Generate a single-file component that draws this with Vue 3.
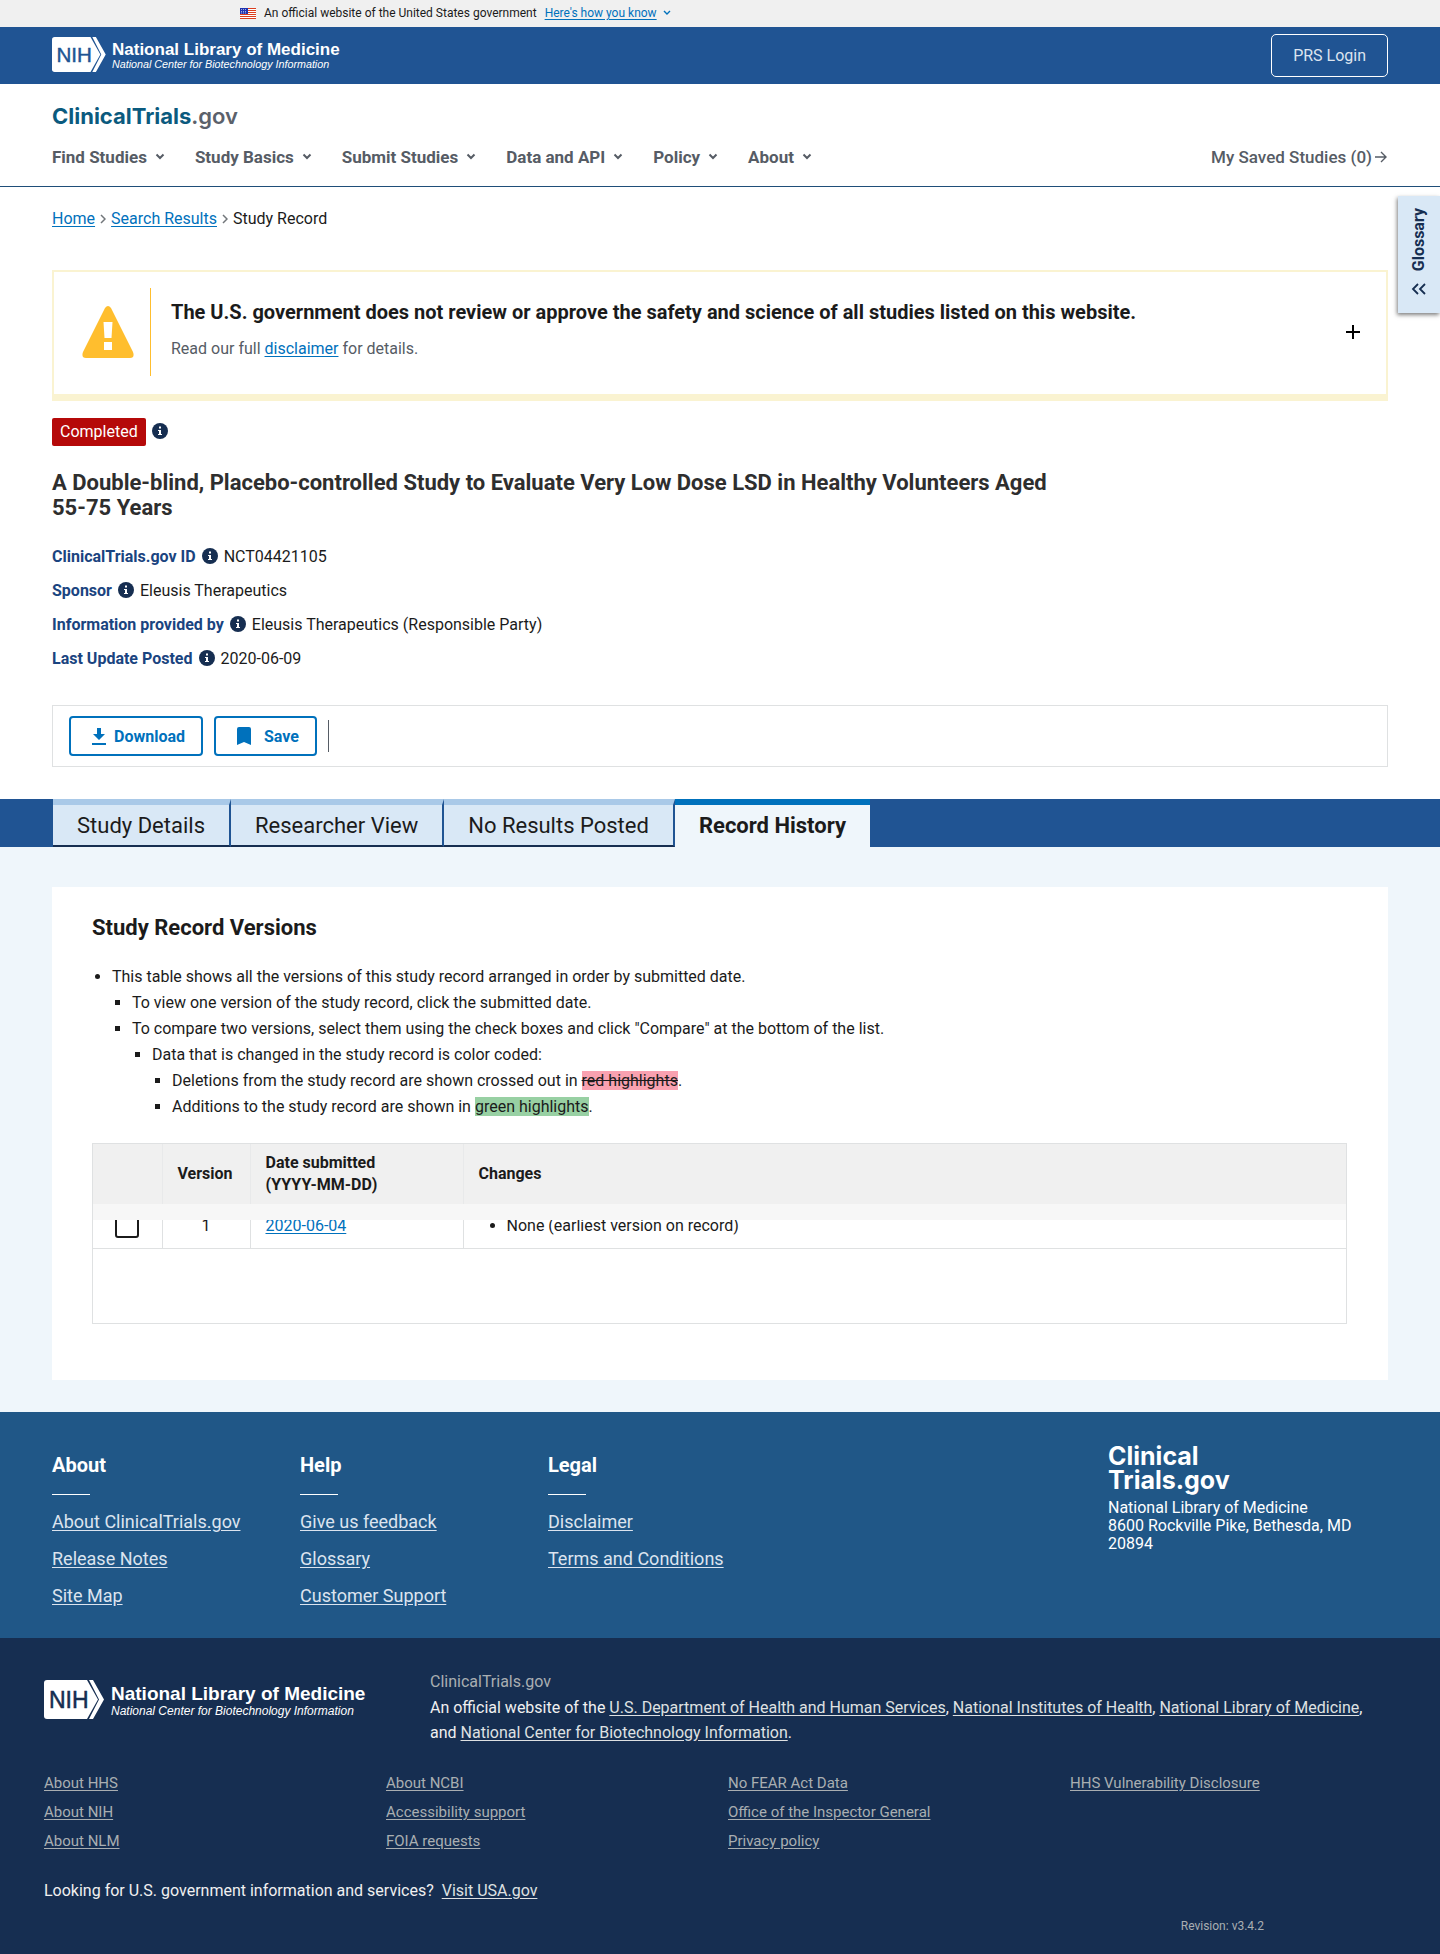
<template>
  <div class="page">
    <!-- 政府網站橫幅 -->
    <div class="gov-banner">
      <svg class="flag" viewBox="0 0 16 11" aria-hidden="true">
        <rect width="16" height="11" fill="#fff" />
        <path d="M0 .5h16M0 2.5h16M0 4.5h16M0 6.5h16M0 8.5h16M0 10.5h16" stroke="#db3e1f" />
        <rect width="8" height="6" fill="#1e33b1" />
        <path d="M1 1.5h6M1 3.5h6M1 5h6" stroke="#fff" stroke-width=".6" stroke-dasharray="1 1" />
      </svg>
      <span>An official website of the United States government</span>
      <button type="button" class="banner-link">
        <span class="banner-link-text">Here's how you know</span>
        <svg viewBox="0 0 8 6" width="8" height="6" aria-hidden="true">
          <path d="M1 1l3 3 3-3" fill="none" stroke="currentColor" stroke-width="1.4" />
        </svg>
      </button>
    </div>

    <header>
      <div class="ncbi-bar">
        <svg class="nlm-logo" viewBox="0 0 326 39" role="img">
          <path d="M3 0H43L54 19.5 43 39H3Q0 39 0 36V3Q0 0 3 0Z" fill="#fff" />
          <path d="M45 0H49L60 19.5 49 39H45L55 19.5Z" fill="#fff" />
          <text x="5" y="28" font-size="23" fill="#205493" stroke="#205493" stroke-width=".5">NIH</text>
          <text x="67" y="20" font-size="19" font-weight="700" fill="#fff">National Library of Medicine</text>
          <text x="67" y="35" font-size="12" font-style="italic" fill="#fff">National Center for Biotechnology Information</text>
        </svg>
        <a href="#" class="prs-login">PRS Login</a>
      </div>

      <div class="site-head">
        <a href="#" class="site-logo">ClinicalTrials<span>.gov</span></a>
        <nav class="main-nav">
          <button v-for="item in navItems" :key="item" type="button" class="nav-item">
            {{ item }}
            <svg viewBox="0 0 10 8" width="10" height="8" aria-hidden="true">
              <path d="M1.5 1.5L5 5l3.500-3.500" fill="none" stroke="currentColor" stroke-width="2" />
            </svg>
          </button>
          <a href="#" class="saved">
            My Saved Studies (0)
            <svg viewBox="0 0 14 14" width="14" height="14" aria-hidden="true">
              <path d="M1 7h11M7 2l5 5-5 5" fill="none" stroke="currentColor" stroke-width="1.4" />
            </svg>
          </a>
        </nav>
      </div>
    </header>

    <button type="button" class="glossary">
      <span>Glossary</span>
      <svg viewBox="0 0 16 12" width="16" height="12" aria-hidden="true">
        <path d="M7 1L2 6l5 5M14 1L9 6l5 5" fill="none" stroke="currentColor" stroke-width="1.8" />
      </svg>
    </button>

    <main>
      <div class="record">
        <nav class="breadcrumb">
          <a href="#">Home</a>
          <svg viewBox="0 0 6 10" width="6" height="10" aria-hidden="true"><path d="M1 1l4 4-4 4" /></svg>
          <a href="#">Search Results</a>
          <svg viewBox="0 0 6 10" width="6" height="10" aria-hidden="true"><path d="M1 1l4 4-4 4" /></svg>
          <span>Study Record</span>
        </nav>

        <section class="notice">
          <svg class="notice-icon" viewBox="0 0 52 52" aria-hidden="true">
            <path d="M23 2Q26-2 29 2L51 46Q53 52 48 52H4Q-1 52 1 46Z" fill="#ffbe2e" />
            <path d="M21.5 16h9l-1 16h-7zM22 36h8v8h-8z" fill="#fff" />
          </svg>
          <div class="notice-body">
            <h2>The U.S. government does not review or approve the safety and science of all studies listed on this website.</h2>
            <p>Read our full <a href="#">disclaimer</a> for details.</p>
          </div>
          <button type="button" class="expand" aria-expanded="false">
            <svg viewBox="0 0 14 14" width="14" height="14" aria-hidden="true">
              <path d="M7 0v14M0 7h14" stroke="currentColor" stroke-width="2" />
            </svg>
          </button>
        </section>

        <div class="status">
          <span class="badge">Completed</span>
          <svg class="info" viewBox="0 0 16 16" aria-hidden="true">
            <circle cx="8" cy="8" r="8" />
            <path d="M7 3.5h2v2H7zM6 7h3v4h1v1H6v-1h1V8H6z" />
          </svg>
        </div>

        <h1>A Double-blind, Placebo-controlled Study to Evaluate Very Low Dose LSD in Healthy Volunteers Aged 55-75 Years</h1>

        <dl class="facts">
          <div v-for="fact in facts" :key="fact.label" class="fact">
            <dt>{{ fact.label }}</dt>
            <svg class="info" viewBox="0 0 16 16" aria-hidden="true">
              <circle cx="8" cy="8" r="8" />
              <path d="M7 3.5h2v2H7zM6 7h3v4h1v1H6v-1h1V8H6z" />
            </svg>
            <dd>{{ fact.value }}</dd>
          </div>
        </dl>

        <div class="actions">
          <button type="button" class="action">
            <svg viewBox="0 0 14 17" width="14" height="17" aria-hidden="true">
              <path d="M5 0h4v6h4L7 12 1 6h4zM0 15h14v2H0z" fill="currentColor" />
            </svg>
            Download
          </button>
          <button type="button" class="action action-save">
            <svg viewBox="0 0 14 18" width="14" height="18" aria-hidden="true">
              <path d="M0 2Q0 0 2 0H12Q14 0 14 2V18L7 15 0 18Z" fill="currentColor" />
            </svg>
            Save
          </button>
          <span class="divider"></span>
        </div>
      </div>

      <div class="tabs" role="tablist">
        <button
          v-for="tab in tabs"
          :key="tab"
          type="button"
          role="tab"
          class="tab"
          :class="{ active: tab === activeTab }"
          :aria-selected="tab === activeTab"
          @click="activeTab = tab"
        >
          {{ tab }}
        </button>
      </div>

      <div class="history">
        <section class="card">
          <h3>Study Record Versions</h3>
          <ul class="help">
            <li>
              This table shows all the versions of this study record arranged in order by submitted date.
              <ul>
                <li>To view one version of the study record, click the submitted date.</li>
                <li>
                  To compare two versions, select them using the check boxes and click "Compare" at the bottom of the list.
                  <ul>
                    <li>
                      Data that is changed in the study record is color coded:
                      <ul>
                        <li>Deletions from the study record are shown crossed out in <del>red highlights</del>.</li>
                        <li>Additions to the study record are shown in <ins>green highlights</ins>.</li>
                      </ul>
                    </li>
                  </ul>
                </li>
              </ul>
            </li>
          </ul>

          <div class="table-box">
            <table>
              <thead>
                <tr>
                  <th class="col-check"></th>
                  <th class="col-version">Version</th>
                  <th class="col-date">Date submitted<br />(YYYY-MM-DD)</th>
                  <th>Changes</th>
                </tr>
              </thead>
              <tbody>
                <tr v-for="row in versions" :key="row.version">
                  <td class="center">
                    <input type="checkbox" v-model="selected" :value="row.version" :aria-label="'Version ' + row.version" />
                  </td>
                  <td class="center">{{ row.version }}</td>
                  <td><a href="#">{{ row.date }}</a></td>
                  <td>
                    <ul class="changes">
                      <li>{{ row.changes }}</li>
                    </ul>
                  </td>
                </tr>
              </tbody>
            </table>
          </div>
        </section>
      </div>
    </main>

    <footer>
      <div class="foot-main">
        <div v-for="col in footerCols" :key="col.title" class="foot-col">
          <h4>{{ col.title }}</h4>
          <ul>
            <li v-for="link in col.links" :key="link"><a href="#">{{ link }}</a></li>
          </ul>
        </div>
        <div class="foot-address">
          <div class="foot-logo">Clinical<br />Trials.gov</div>
          <address>National Library of Medicine<br />8600 Rockville Pike, Bethesda, MD 20894</address>
        </div>
      </div>

      <div class="foot-agency">
        <div class="agency-top">
          <svg class="nlm-logo-large" viewBox="0 0 326 39" role="img">
            <path d="M3 0H43L54 19.5 43 39H3Q0 39 0 36V3Q0 0 3 0Z" fill="#fff" />
            <path d="M45 0H49L60 19.5 49 39H45L55 19.5Z" fill="#fff" />
            <text x="5" y="28" font-size="23" fill="#162e51" stroke="#162e51" stroke-width=".5">NIH</text>
            <text x="67" y="20" font-size="19" font-weight="700" fill="#fff">National Library of Medicine</text>
            <text x="67" y="35" font-size="12" font-style="italic" fill="#fff">National Center for Biotechnology Information</text>
          </svg>
          <div class="agency-text">
            <p class="domain">ClinicalTrials.gov</p>
            <p>
              An official website of the <a href="#">U.S. Department of Health and Human Services</a>,
              <a href="#">National Institutes of Health</a>, <a href="#">National Library of Medicine</a>,<br />
              and <a href="#">National Center for Biotechnology Information</a>.
            </p>
          </div>
        </div>
        <div class="agency-links">
          <ul v-for="(col, i) in agencyCols" :key="i">
            <li v-for="link in col" :key="link"><a href="#">{{ link }}</a></li>
          </ul>
        </div>
        <p class="usa">Looking for U.S. government information and services? <a href="#">Visit USA.gov</a></p>
        <p class="revision">Revision: v3.4.2</p>
      </div>
    </footer>
  </div>
</template>

<script setup>
import { ref } from 'vue'

const navItems = ['Find Studies', 'Study Basics', 'Submit Studies', 'Data and API', 'Policy', 'About']

const facts = [
  { label: 'ClinicalTrials.gov ID', value: 'NCT04421105' },
  { label: 'Sponsor', value: 'Eleusis Therapeutics' },
  { label: 'Information provided by', value: 'Eleusis Therapeutics (Responsible Party)' },
  { label: 'Last Update Posted', value: '2020-06-09' }
]

const tabs = ['Study Details', 'Researcher View', 'No Results Posted', 'Record History']
const activeTab = ref('Record History')

const versions = ref([
  { version: 1, date: '2020-06-04', changes: 'None (earliest version on record)' }
])
const selected = ref([])

const footerCols = [
  { title: 'About', links: ['About ClinicalTrials.gov', 'Release Notes', 'Site Map'] },
  { title: 'Help', links: ['Give us feedback', 'Glossary', 'Customer Support'] },
  { title: 'Legal', links: ['Disclaimer', 'Terms and Conditions'] }
]

const agencyCols = [
  ['About HHS', 'About NIH', 'About NLM'],
  ['About NCBI', 'Accessibility support', 'FOIA requests'],
  ['No FEAR Act Data', 'Office of the Inspector General', 'Privacy policy'],
  ['HHS Vulnerability Disclosure']
]
</script>

<style>
body { margin: 0; background: #fff; }
</style>

<style scoped>
.page { position: relative; font-family: Roboto, "Liberation Sans", sans-serif; font-size: 16px; line-height: 26px; color: #1b1b1b; }
.page *, .page *::after { box-sizing: border-box; }
button { font-family: inherit; border: 0; background: none; padding: 0; cursor: pointer; }
h1, h2, h3, h4, p, dl, dd, ul { margin: 0; padding: 0; }
a { color: #0071bc; text-underline-offset: 2px; }
svg { flex: none; }

/* 頂部橫幅 */
.gov-banner { display: flex; align-items: center; height: 27px; padding: 0 240px 1px; background: #f0f0f0; font-size: 12px; line-height: 16px; }
.flag { width: 16px; height: 11px; margin-right: 8px; }
.banner-link { display: flex; align-items: center; gap: 6px; margin-left: 8px; font-size: 12px; color: #0071bc; }
.banner-link-text { text-decoration: underline; text-underline-offset: 2px; }

.ncbi-bar { display: flex; justify-content: space-between; align-items: center; height: 57px; padding: 0 52px; background: #205493; }
.nlm-logo { width: 292px; height: 35px; margin-bottom: 2px; font-family: "Liberation Sans", Arial, sans-serif; }
.prs-login { padding: 8px 21px; border: 1px solid #fff; border-radius: 5px; font-size: 16px; line-height: 25px; color: #dce4ef; text-decoration: none; }

.site-head { padding: 18px 52px 16px; border-bottom: 1px solid #1f4e79; }
.site-logo { display: block; width: fit-content; font-family: Inter, "Open Sans", sans-serif; font-size: 22px; font-weight: 700; line-height: 28px; color: #0b5a7e; text-decoration: none; }
.site-logo span { font-weight: 600; color: #5b616b; }
.main-nav { display: flex; align-items: center; gap: 30px; margin-top: 14px; }
.nav-item, .saved { display: flex; align-items: center; font-size: 17px; font-weight: 700; line-height: 26px; color: #565c65; }
.nav-item { gap: 8px; }
.saved { gap: 2px; margin-left: auto; text-decoration: none; font-weight: 500; }

/* 右側詞彙表 */
.glossary { position: absolute; top: 196px; right: 0; display: flex; flex-direction: column; align-items: center; gap: 12px; width: 42px; padding: 12px 0 18px; background: #d9e8f6; box-shadow: -1px 2px 4px rgba(0, 0, 0, 0.5); color: #162e51; font-size: 16px; font-weight: 700; line-height: 20px; }
.glossary span { writing-mode: vertical-rl; transform: rotate(180deg); }

.record { padding: 18px 52px 32px; }
.breadcrumb { display: flex; align-items: center; gap: 5px; line-height: 28px; }
.breadcrumb path { fill: none; stroke: #71767a; stroke-width: 1.5; }

.notice { display: flex; align-items: center; margin-top: 37px; padding: 16px 26px 18px 28px; border: 2px solid #faf3d1; border-bottom-width: 7px; }
.notice-icon { width: 52px; height: 52px; }
.notice-body { flex: 1; height: 88px; margin-left: 16px; padding: 11px 0 0 20px; border-left: 1px solid #ffbe2e; }
.notice h2 { font-size: 20px; line-height: 26px; }
.notice p { margin-top: 11px; color: #565c65; }
.expand { color: #000; line-height: 0; }

.status { display: flex; align-items: center; gap: 6px; margin-top: 17px; }
.badge { padding: 1px 8px; border-radius: 2px; background: #b50909; color: #fff; }
.info { width: 16px; height: 16px; margin-bottom: 3px; }
.info circle { fill: #162e51; }
.info path { fill: #fff; }

h1 { max-width: 1020px; margin-top: 24px; font-size: 22px; line-height: 25px; color: #2e2e2e; }
.facts { margin-top: 20px; }
.fact { display: flex; align-items: center; gap: 6px; height: 34px; }
.fact dt { font-weight: 700; color: #1a4480; }

.actions { display: flex; align-items: center; gap: 11px; height: 62px; margin-top: 29px; padding: 0 16px; border: 1px solid #dfe1e2; }
.action { display: flex; align-items: center; gap: 8px; height: 40px; padding: 0 16px 0 21px; border: 2px solid #0071bc; border-radius: 4px; background: #fff; color: #0071bc; font-size: 16px; font-weight: 700; }
.action-save { gap: 13px; }
.divider { width: 1px; height: 32px; background: #565c65; }

/* 分頁列 */
.tabs { display: flex; height: 48px; padding: 0 53px; background: #205493; }
.tab { padding: 0 24px; border-top: 6px solid #a9c9e8; border-right: 2px solid #205493; border-bottom: 2px solid #162e51; background: #d9e8f6; color: #1b1b1b; font-size: 22px; }
.tab.active { border-top-color: #0071bc; border-right: 0; border-bottom-color: #eff6fb; background: #eff6fb; font-weight: 700; }

.history { padding: 40px 52px 32px; background: #eff6fb; }
.card { padding: 28px 41px 56px 40px; background: #fff; }
h3 { font-size: 22px; line-height: 26px; }
.help { margin-top: 23px; }
.help, .help ul { padding-left: 20px; }
.help ul { list-style: square; }
del { background: #f9a1b0; }
ins { background: #98d0a3; text-decoration: none; }

.table-box { height: 181px; margin-top: 23px; border: 1px solid #dfe1e2; }
table { width: 100%; border-collapse: collapse; table-layout: fixed; }
/* 表頭下方的淺色帶蓋住第一列上緣 */
thead { position: relative; z-index: 1; }
thead::after { content: ""; position: absolute; top: 100%; left: 0; right: 0; height: 16px; background: #f7f7f7; }
th { height: 60px; padding: 0 15px; background: #f0f0f0; text-align: left; line-height: 22px; border-right: 1px solid #e8e9ea; }
td { height: 44px; padding: 0 15px; border-right: 1px solid #dfe1e2; border-bottom: 1px solid #dfe1e2; }
th:last-child, td:last-child { border-right: 0; }
.col-check { width: 69px; }
.col-version { width: 88px; }
.col-date { width: 213px; }
.center { text-align: center; padding: 0; }
.changes { padding-left: 28px; }
input[type="checkbox"] { appearance: none; display: block; width: 24px; height: 24px; margin: 0 auto; border: 2px solid #1b1b1b; border-radius: 3px; background: #fff; }
input[type="checkbox"]:checked { background: #0071bc; }

/* 頁尾 */
footer ul { list-style: none; }
.foot-main { display: flex; padding: 32px 52px 23px; background: #205787; color: #fff; }
.foot-col { width: 248px; padding-top: 8px; }
.foot-col h4 { font-size: 20px; line-height: 26px; }
.foot-col h4::after { content: ""; display: block; width: 38px; height: 1px; margin: 16px 0 9px; background: #fff; }
.foot-col li { height: 37px; line-height: 36px; font-size: 18px; }
.foot-col a { color: #dce4ef; }
.foot-address { width: 280px; margin-left: auto; }
.foot-logo { font-family: Inter, "Open Sans", sans-serif; font-size: 25px; font-weight: 700; line-height: 24px; }
address { margin-top: 7px; font-style: normal; line-height: 18px; }

.foot-agency { padding: 31px 28px 20px 44px; background: #162e51; color: #f0f0f0; }
.agency-top { display: flex; align-items: flex-start; gap: 60px; }
.nlm-logo-large { width: 326px; height: 39px; margin-top: 11px; font-family: "Liberation Sans", Arial, sans-serif; }
.agency-text { flex: 1; max-width: 940px; line-height: 25px; }
.agency-text .domain { margin-bottom: 1px; color: #a9aeb1; }
.agency-text a, .usa a { color: #dfe1e2; }
.agency-links { display: grid; grid-template-columns: repeat(4, 1fr); margin-top: 24px; font-size: 15px; line-height: 29px; }
.agency-links a { color: #a9aeb1; }
.usa { margin-top: 22px; }
.usa a { margin-left: 4px; }
.revision { margin: 14px 148px 0 0; font-size: 12px; line-height: 16px; text-align: right; color: #a9aeb1; }
</style>
